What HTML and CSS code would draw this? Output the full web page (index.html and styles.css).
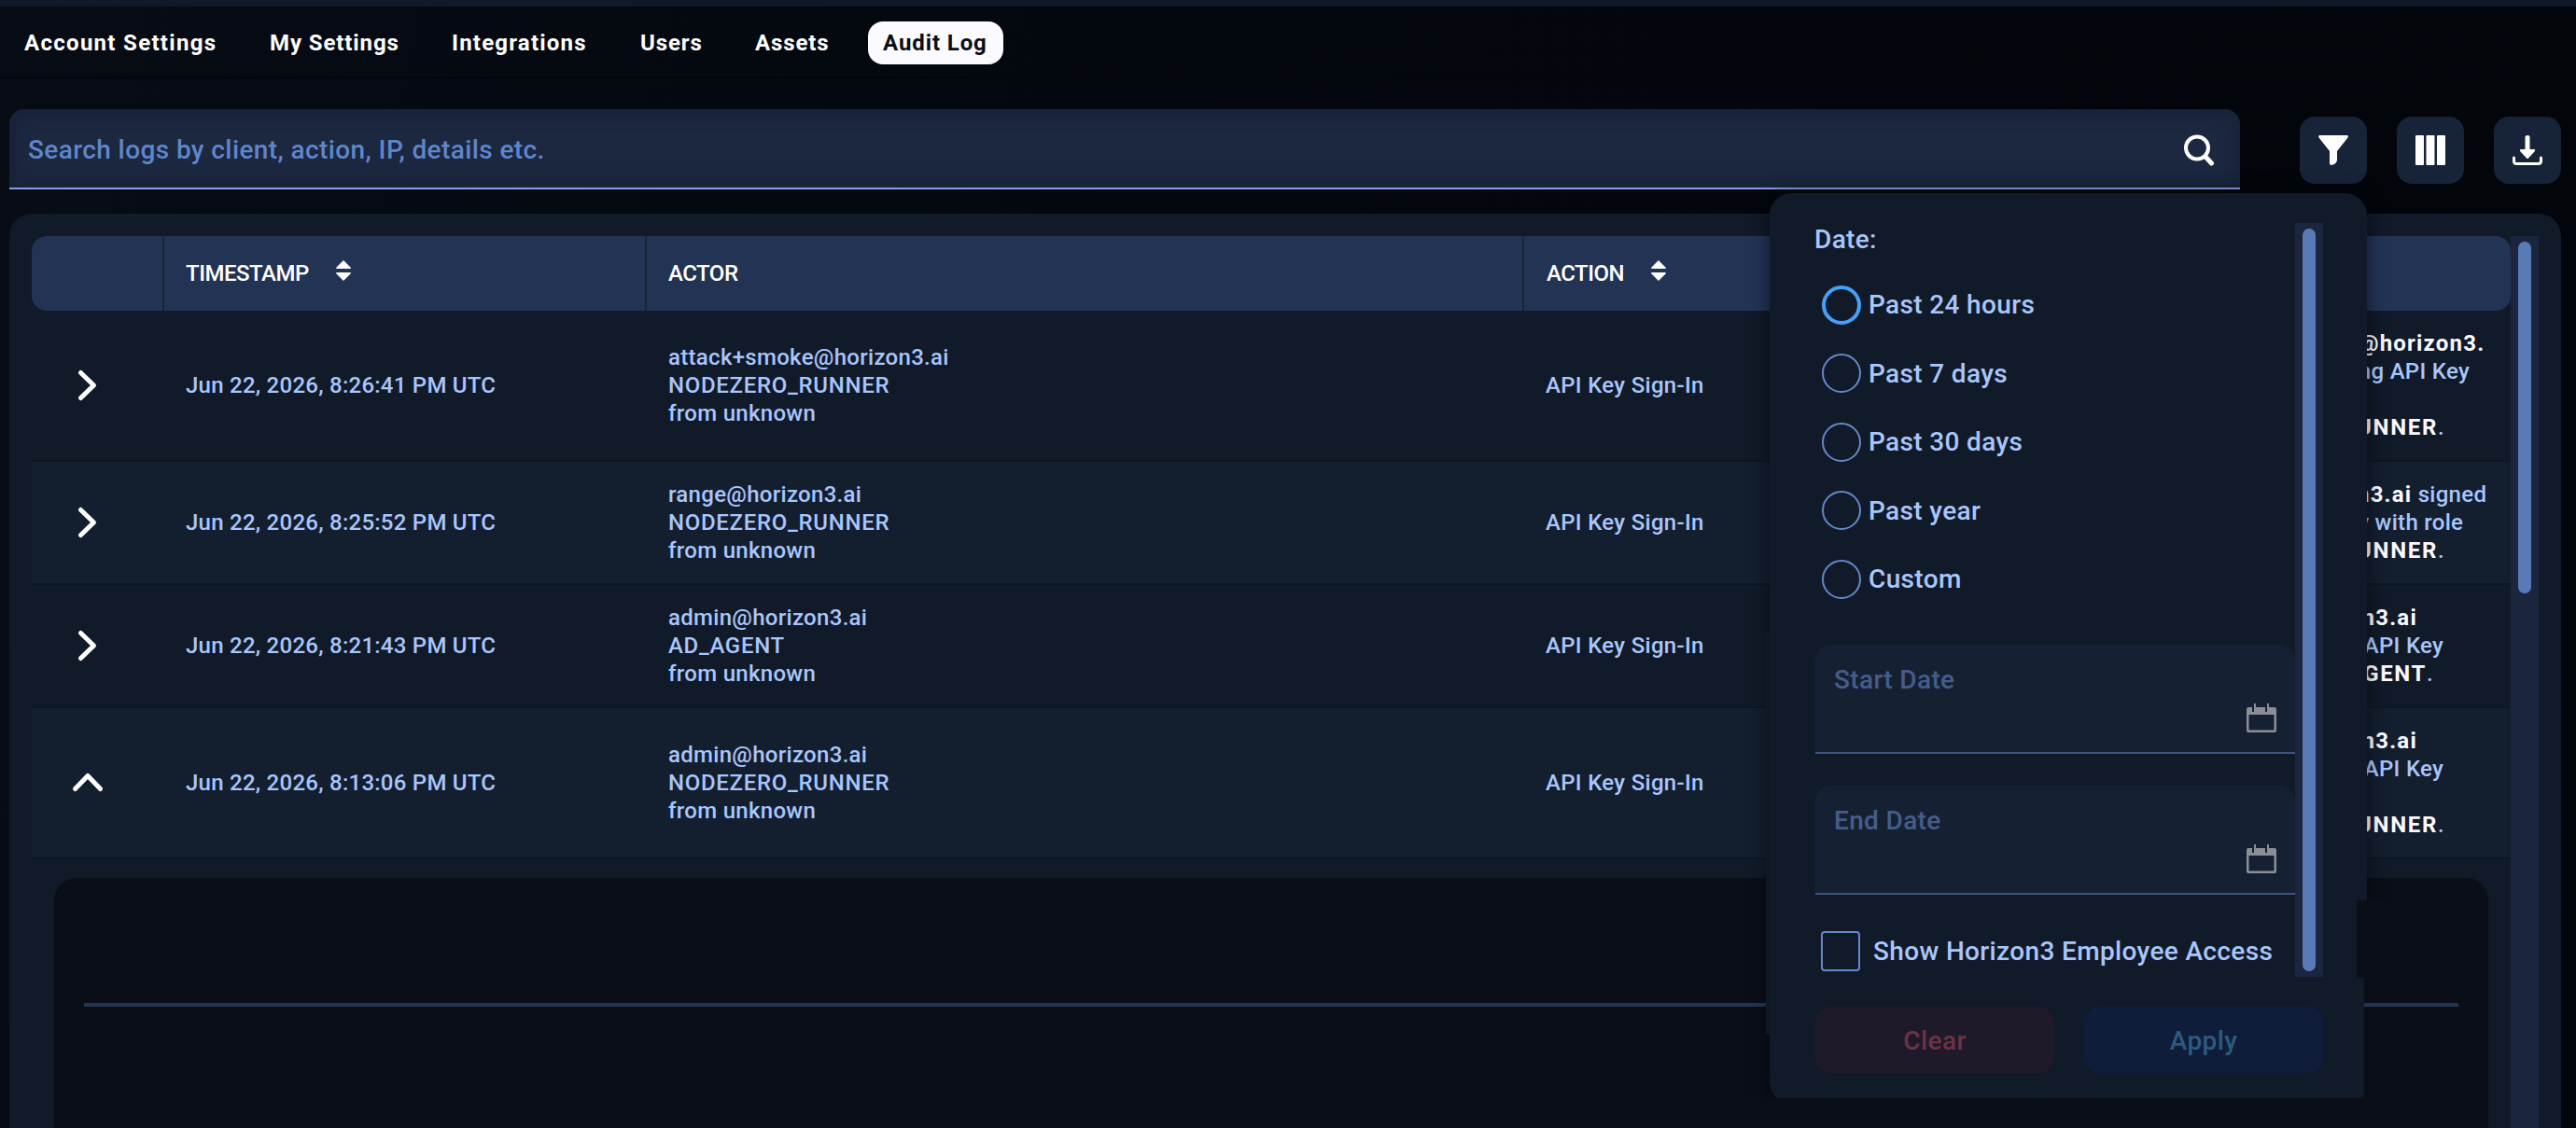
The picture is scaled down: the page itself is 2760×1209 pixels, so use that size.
FILE: index.html
```html
<!DOCTYPE html>
<html lang="en">
<head>
  <meta charset="UTF-8">
  <meta name="viewport" content="width=device-width, initial-scale=1.0">
  <title>Audit Log</title>
  <link rel="stylesheet" href="styles.css">
</head>
<body>

<nav class="tabs">
  <a class="tab t-account">Account Settings</a>
  <a class="tab t-my">My Settings</a>
  <a class="tab t-integrations">Integrations</a>
  <a class="tab t-users">Users</a>
  <a class="tab t-assets">Assets</a>
  <a class="tab active">Audit Log</a>
</nav>

<div class="toolbar">
  <div class="search">
    <span>Search logs by client, action, IP, details etc.</span>
    <svg width="34" height="34" viewBox="0 0 34 34" fill="none" stroke="#fff" stroke-linecap="round">
      <circle cx="15" cy="14.5" r="12" stroke-width="4"/>
      <path d="M24 24l6.500 7" stroke-width="5"/>
    </svg>
  </div>
  <button class="tool">
    <svg width="32" height="32" viewBox="0 0 32 32" fill="#fff"><path d="M1 0h30q1.500 1 .5 2.500L20 17v10q-1 4-6 5q-2 0-2-2V17L.5 2.500Q-.5 1 1 0z"/></svg>
  </button>
  <button class="tool">
    <svg width="32" height="32" viewBox="0 0 32 32" fill="#fff"><rect width="9" height="32" rx="1"/><rect x="11.500" width="9" height="32" rx="1"/><rect x="23" width="9" height="32" rx="1"/></svg>
  </button>
  <button class="tool">
    <svg width="32" height="32" viewBox="0 0 32 32"><path d="M1.500 24v3.500q0 3 3 3h23q3 0 3-3V24" fill="none" stroke="#fff" stroke-width="3" stroke-linecap="round"/><path d="M13.500 2q0-2 2.500-2t2.500 2v13h4.500q2 .5.5 2.500L17 24.500q-1 1-2 0L8.500 17.500Q7 15.500 9 15h4.500z" fill="#fff"/></svg>
  </button>
</div>

<div class="panel">
  <div class="table">
    <div class="row head">
      <div></div>
      <div>TIMESTAMP <svg class="sort" width="18" height="22" viewBox="0 0 18 22"><path d="M9 0l8 8q0 1-1 1H2q-1 0-1-1zM9 22l8-8q0-1-1-1H2q-1 0-1 1z"/></svg></div>
      <div>ACTOR</div>
      <div>ACTION <svg class="sort" width="18" height="22" viewBox="0 0 18 22"><path d="M9 0l8 8q0 1-1 1H2q-1 0-1-1zM9 22l8-8q0-1-1-1H2q-1 0-1 1z"/></svg></div>
      <div></div>
    </div>
    <div class="row">
      <div class="toggle"><svg width="24" height="36" viewBox="0 0 24 36"><path d="M4.500 4.500L18.500 18 4.500 31.500"/></svg></div>
      <div class="time">Jun 22, 2026, 8:26:41 PM UTC</div>
      <div>attack+smoke@horizon3.ai<br><span class="role">NODEZERO_RUNNER</span><br>from unknown</div>
      <div>API Key Sign-In</div>
      <div class="details"><b>attack+smoke@horizon3.</b><br><b>ai</b> signed in using API Key<br>smoke with role<br><b class="role">NODEZERO_RUNNER</b>.</div>
    </div>
    <div class="row even">
      <div class="toggle"><svg width="24" height="36" viewBox="0 0 24 36"><path d="M4.500 4.500L18.500 18 4.500 31.500"/></svg></div>
      <div class="time">Jun 22, 2026, 8:25:52 PM UTC</div>
      <div>range@horizon3.ai<br><span class="role">NODEZERO_RUNNER</span><br>from unknown</div>
      <div>API Key Sign-In</div>
      <div class="details"><b>range@horizon3.ai</b> signed<br>in using API Key with role<br><b class="role">NODEZERO_RUNNER</b>.</div>
    </div>
    <div class="row">
      <div class="toggle"><svg width="24" height="36" viewBox="0 0 24 36"><path d="M4.500 4.500L18.500 18 4.500 31.500"/></svg></div>
      <div class="time">Jun 22, 2026, 8:21:43 PM UTC</div>
      <div>admin@horizon3.ai<br><span class="role">AD_AGENT</span><br>from unknown</div>
      <div>API Key Sign-In</div>
      <div class="details"><b>admin@horizon3.ai</b><br>signed in using API Key<br>with role&nbsp; <b class="role">AD_AGENT</b>.</div>
    </div>
    <div class="row even">
      <div class="toggle"><svg width="36" height="24" viewBox="0 0 36 24"><path d="M4.500 18.500L18 4.500 31.500 18.500"/></svg></div>
      <div class="time">Jun 22, 2026, 8:13:06 PM UTC</div>
      <div>admin@horizon3.ai<br><span class="role">NODEZERO_RUNNER</span><br>from unknown</div>
      <div>API Key Sign-In</div>
      <div class="details"><b>admin@horizon3.ai</b><br>signed in using API Key<br>with role<br><b class="role">NODEZERO_RUNNER</b>.</div>
    </div>
    <div class="expanded"><hr></div>
  </div>
  <div class="track"><div class="thumb short"></div></div>
</div>

<div class="filter">
  <div class="filter-body">
    <div class="fields">
      <p>Date:</p>
      <label class="radio focus"><i></i>Past 24 hours</label>
      <label class="radio"><i></i>Past 7 days</label>
      <label class="radio"><i></i>Past 30 days</label>
      <label class="radio"><i></i>Past year</label>
      <label class="radio"><i></i>Custom</label>
      <div class="date">
        <span>Start Date</span>
        <svg width="32" height="34" viewBox="0 0 32 34"><path d="M2 5h4v5h2V1h2v4h10v5h2V1h2v4h6q2 0 2 2v23q0 2-2 2H2q-2 0-2-2V7q0-2 2-2zM2.500 13v16.500h27V13z" fill="#8c8e96" fill-rule="evenodd"/></svg>
      </div>
      <div class="date">
        <span>End Date</span>
        <svg width="32" height="34" viewBox="0 0 32 34"><path d="M2 5h4v5h2V1h2v4h10v5h2V1h2v4h6q2 0 2 2v23q0 2-2 2H2q-2 0-2-2V7q0-2 2-2zM2.500 13v16.500h27V13z" fill="#8c8e96" fill-rule="evenodd"/></svg>
      </div>
      <label class="check"><i></i>Show Horizon3 Employee Access</label>
    </div>
    <div class="track"><div class="thumb"></div></div>
  </div>
  <div class="actions">
    <button class="clear">Clear</button>
    <button class="apply">Apply</button>
  </div>
</div>

</body>
</html>
```
FILE: styles.css
```css
* {
  box-sizing: border-box;
}
body {
  margin: 0;
  height: 1209px;
  overflow: hidden;
  position: relative;
  display: flex;
  flex-direction: column;
  font-family: Roboto, sans-serif;
  font-size: 24px;
  font-weight: 500;
  color: #a9c6fb;
  background: linear-gradient(100deg, #080c15 0%, #04080f 30%, #02050a 100%);
}
button {
  border: none;
  padding: 0;
  font-family: inherit;
  font-weight: inherit;
}

/* Top tabs */
.tabs {
  height: 84px;
  flex: none;
  display: flex;
  align-items: flex-start;
  padding: 16px 10px;
  gap: 25px;
  border-top: 7px solid #10192a;
  border-bottom: 2px solid #030509;
}
.tab {
  height: 46px;
  padding: 0 16px;
  line-height: 46px;
  font-weight: 700;
  letter-spacing: 0.9px;
  color: #fff;
  white-space: nowrap;
}
.t-account {
  width: 238px;
  letter-spacing: 1.3px;
}
.t-my {
  width: 170px;
}
.t-integrations {
  width: 177px;
  letter-spacing: 1.2px;
}
.t-users {
  width: 98px;
}
.t-assets {
  width: 112px;
}
.tab.active {
  width: 145px;
  border-radius: 16px;
  background: #fbfaff;
  color: #0b0e14;
}

/* Search and buttons */
.toolbar {
  display: flex;
  flex: none;
  align-items: center;
  gap: 32px;
  height: 86px;
  margin: 33px 16px 0 10px;
}
.search {
  flex: 1;
  height: 86px;
  margin-right: 32px;
  padding: 3px 27px 0 20px;
  display: flex;
  align-items: center;
  justify-content: space-between;
  border-radius: 16px 16px 0 0;
  border-bottom: 2px solid #82a3e2;
  background: #1c2740;
  box-shadow: inset 0 0 20px #162133;
  color: #5f86cb;
  font-size: 28px;
  letter-spacing: 0.4px;
}
.tool {
  width: 72px;
  height: 72px;
  margin-top: 2px;
  display: flex;
  align-items: center;
  justify-content: center;
  border-radius: 16px;
  background: #172338;
}

/* Log table */
.panel {
  flex: 1;
  min-height: 0;
  display: flex;
  margin: 26px 16px 0 10px;
  padding: 24px 24px 0;
  border-radius: 24px 24px 0 0;
  background: #111a29;
}
.table {
  flex: 1;
  overflow: hidden;
}
.row {
  display: grid;
  grid-template-columns: 142px 517px 940px 704px 1fr;
  align-items: center;
  padding: 20px 0;
  border-bottom: 2px solid #0e1622;
  line-height: 30px;
  letter-spacing: 0.3px;
  white-space: nowrap;
}
.row > div {
  padding-left: 23px;
}
.row > .time {
  letter-spacing: 0.25px;
}
.row.even {
  background: #131e2f;
}
.role {
  letter-spacing: 0.7px;
}
.row.head {
  height: 80px;
  padding: 0;
  align-items: stretch;
  border: none;
  border-radius: 16px;
  background: #223354;
  color: #fff;
  line-height: 80px;
  letter-spacing: -0.5px;
}
.head > div {
  display: flex;
  align-items: center;
  border-right: 2px solid #182438;
}
.head > div:nth-child(4) {
  padding-left: 24px;
}
.head > div:nth-child(n+4) {
  border: none;
}
.sort {
  margin: -6px 0 0 28px;
  fill: #fff;
}
.row > .toggle {
  display: flex;
  justify-content: center;
  padding: 0 22px 0 0;
}
.toggle path {
  fill: none;
  stroke: #fff;
  stroke-width: 5;
  stroke-linecap: round;
  stroke-linejoin: round;
}
.details b {
  letter-spacing: 1.2px;
  color: #fbfaff;
}
.details .role {
  letter-spacing: 1.65px;
}
.expanded {
  height: 400px;
  margin: 20px 24px 0;
  padding: 134px 32px 0;
  border-radius: 24px;
  background: #0a0e17;
}
.expanded hr {
  height: 4px;
  margin: 0;
  border: none;
  background: #223354;
}
.track {
  width: 30px;
  flex: none;
  padding: 6px 8px;
  background: #1b263e;
}
.thumb {
  height: 100%;
  border-radius: 8px;
  background: #5a7ab5;
}
.thumb.short {
  height: 377px;
}

/* Filter menu */
.filter {
  position: absolute;
  top: 207px;
  left: 1896px;
  width: 640px;
  height: 976px;
  padding: 32px 47px 0 49px;
  border-radius: 24px 24px 4px 24px;
  background: #111a29;
  box-shadow: 0 0 20px rgba(0, 0, 0, 0.5);
  clip-path: polygon(-40px -40px, 680px -40px, 680px 758px, 629px 758px, 629px 841px, 637px 841px, 637px 970px, -40px 970px);
  font-size: 28px;
  letter-spacing: 0.35px;
}
.filter::before {
  content: "";
  position: absolute;
  top: 470px;
  left: -4px;
  width: 4px;
  height: 432px;
  background: #0f1825;
}
.filter-body {
  display: flex;
  height: 808px;
}
.fields {
  flex: 1;
  min-width: 0;
}
.fields p {
  margin: 0 0 17px -1px;
  height: 34px;
  line-height: 36px;
}
.radio {
  display: flex;
  align-items: center;
  gap: 8px;
  height: 73.5px;
  padding-left: 7px;
}
.radio i,
.check i {
  width: 42px;
  height: 42px;
  flex: none;
  border: 2px solid #6488cb;
  border-radius: 50%;
}
.radio.focus i {
  border: 4px solid #46a0f7;
}
.date {
  height: 117px;
  margin-bottom: 34px;
  padding: 21px 20px 19px 20px;
  display: flex;
  justify-content: space-between;
  border-radius: 16px 16px 0 0;
  border-bottom: 2px solid #3d5680;
  background: #152133;
  color: #455d8b;
}
.radio + .date {
  margin-top: 33px;
}
.date svg {
  align-self: flex-end;
}
.check {
  display: flex;
  align-items: center;
  gap: 14px;
  margin-top: 39px;
  padding-left: 6px;
  white-space: nowrap;
}
.check i {
  height: 43px;
  border-radius: 4px;
}
.actions {
  display: flex;
  gap: 32px;
  margin-top: 32px;
}
.actions button {
  flex: 1;
  height: 71px;
  padding-top: 2px;
  border-radius: 16px;
  font-size: 28px;
  letter-spacing: 0.4px;
}
.clear {
  background: #1e1a29;
  color: #6f3245;
}
.apply {
  background: #101d3a;
  color: #2b5b80;
}
```
